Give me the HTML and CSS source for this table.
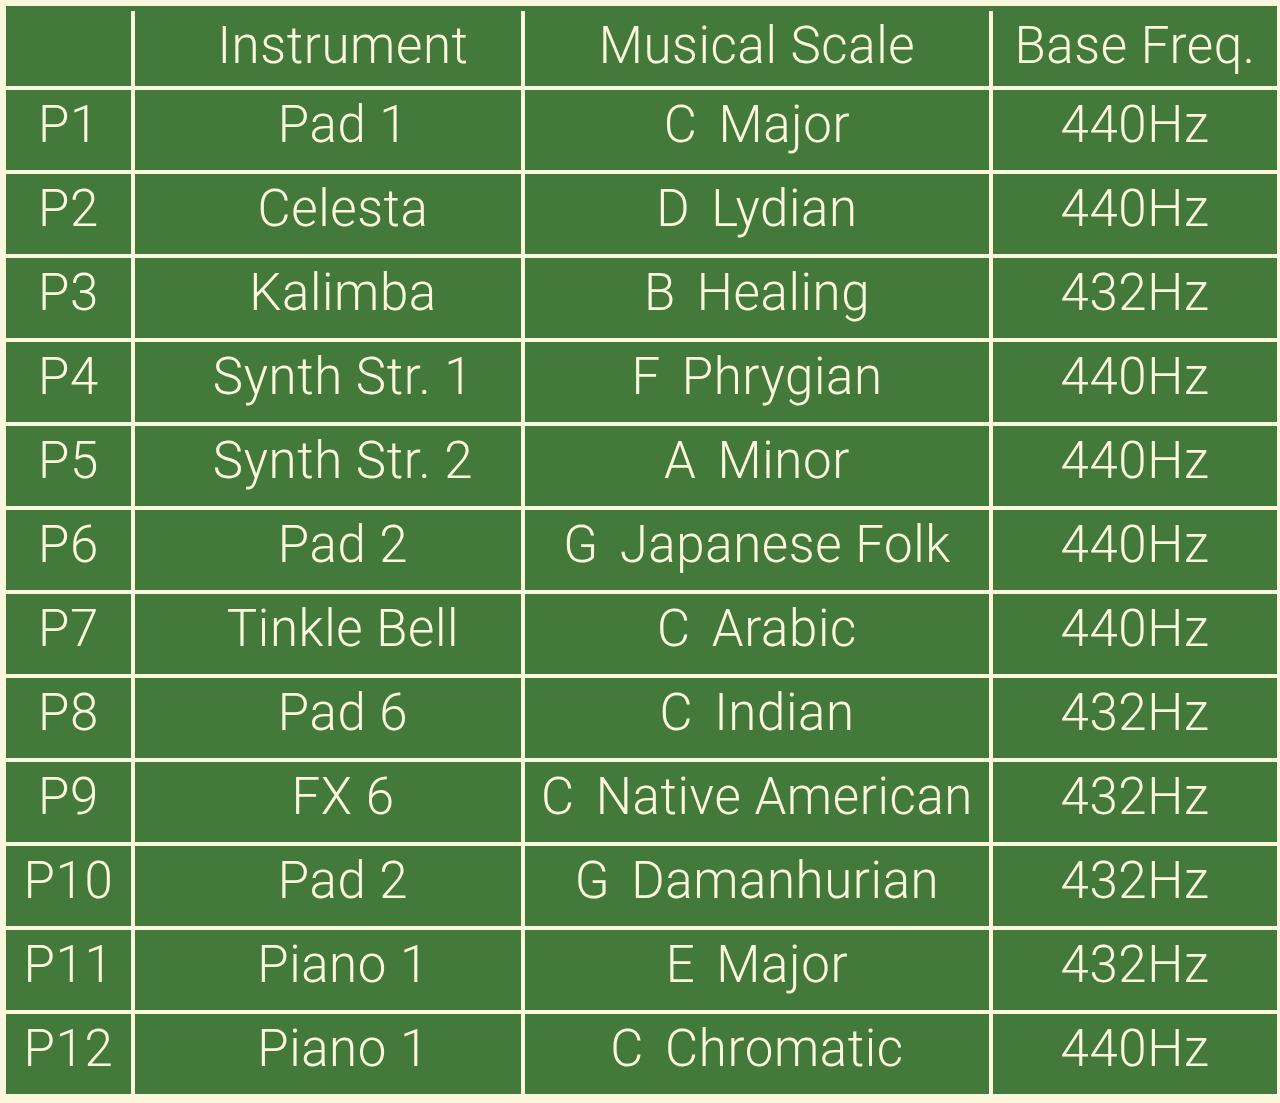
FILE: index.html
```html
<!DOCTYPE html>
<html>
<head>
<meta charset="utf-8">
<link rel="stylesheet" href="styles.css">
</head>
<body>
<div class="table">
  <div class="cell head"></div>
  <div class="cell head inst">Instrument</div>
  <div class="cell head">Musical Scale</div>
  <div class="cell head">Base Freq.</div>

  <div class="cell">P1</div><div class="cell inst">Pad 1</div><div class="cell"><span class="key">C</span>Major</div><div class="cell">440Hz</div>
  <div class="cell">P2</div><div class="cell inst">Celesta</div><div class="cell"><span class="key">D</span>Lydian</div><div class="cell">440Hz</div>
  <div class="cell">P3</div><div class="cell inst">Kalimba</div><div class="cell"><span class="key">B</span>Healing</div><div class="cell">432Hz</div>
  <div class="cell">P4</div><div class="cell inst">Synth Str. 1</div><div class="cell"><span class="key">F</span>Phrygian</div><div class="cell">440Hz</div>
  <div class="cell">P5</div><div class="cell inst">Synth Str. 2</div><div class="cell"><span class="key">A</span>Minor</div><div class="cell">440Hz</div>
  <div class="cell">P6</div><div class="cell inst">Pad 2</div><div class="cell"><span class="key">G</span>Japanese Folk</div><div class="cell">440Hz</div>
  <div class="cell">P7</div><div class="cell inst">Tinkle Bell</div><div class="cell"><span class="key">C</span>Arabic</div><div class="cell">440Hz</div>
  <div class="cell">P8</div><div class="cell inst">Pad 6</div><div class="cell"><span class="key">C</span>Indian</div><div class="cell">432Hz</div>
  <div class="cell">P9</div><div class="cell inst">FX 6</div><div class="cell"><span class="key">C</span>Native American</div><div class="cell">432Hz</div>
  <div class="cell">P10</div><div class="cell inst">Pad 2</div><div class="cell"><span class="key">G</span>Damanhurian</div><div class="cell">432Hz</div>
  <div class="cell">P11</div><div class="cell inst">Piano 1</div><div class="cell"><span class="key">E</span>Major</div><div class="cell">432Hz</div>
  <div class="cell">P12</div><div class="cell inst">Piano 1</div><div class="cell"><span class="key">C</span>Chromatic</div><div class="cell">440Hz</div>
</div>
</body>
</html>
```

FILE: styles.css
```css
html, body {
  margin: 0;
  padding: 0;
  background: #fbf7da;
}

body {
  font-family: Roboto, "Liberation Sans", sans-serif;
  font-weight: 300;
  color: #fbf7da;
}

.table {
  margin: 6px 3px 9px 6px;
  border-top: 5px solid #437a3b;
  display: grid;
  grid-template-columns: 125px 386px 464px 284px;
  grid-template-rows: 75px repeat(12, 80px);
  gap: 4px;
  background: #fbf7da;
}

.cell {
  background: #437a3b;
  display: flex;
  align-items: center;
  justify-content: center;
  font-size: 51px;
  letter-spacing: 0.6px;
  white-space: nowrap;
  padding-bottom: 11px;
  box-sizing: border-box;
}

.cell.head {
  padding-bottom: 6px;
}

.cell.inst {
  padding-left: 30px;
}

.key {
  margin-right: 21px;
}
```
